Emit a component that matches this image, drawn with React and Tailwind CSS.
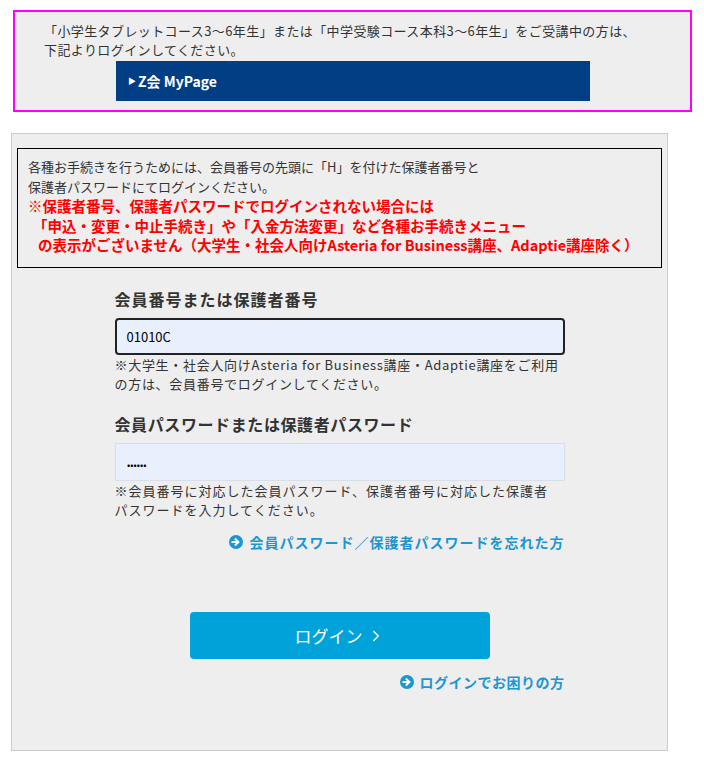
import { ChevronRight } from 'lucide-react'

const font = { fontFamily: '"Noto Sans CJK JP", "Noto Sans", sans-serif' }

function ArrowCircle() {
  return (
    <svg className="w-[14px] h-[14px] shrink-0" viewBox="0 0 16 16">
      <circle cx="8" cy="8" r="8" fill="#1b96d3" />
      <path d="M4 8h6.5M7.5 4.8L10.8 8 7.5 11.2" fill="none" stroke="#fff" strokeWidth="2.2" strokeLinecap="square" />
    </svg>
  )
}

function App() {
  return (
    <div className="w-[704px] min-h-[759px] bg-white pt-[10px] text-[#333]" style={font}>
      {/* MyPage notice */}
      <div className="ml-[13px] w-[679px] h-[102px] border-2 border-[#ff00ff] bg-[#eeeeee]">
        <p className="pl-[29px] pt-[9px] text-[13px] leading-[19px] tracking-[0.4px]">
          「小学生タブレットコース3〜6年生」または「中学受験コース本科3〜6年生」をご受講中の方は、
          <br />
          下記よりログインしてください。
        </p>
        <div className="ml-[101px] mt-[2px] w-[474px] h-[40px] bg-[#023e84] flex items-center pl-[12px] text-white text-[14px] font-bold">
          <span className="text-[8px] mr-[2px]">▶</span>
          Z会 MyPage
        </div>
      </div>

      {/* Login panel */}
      <div className="ml-[11px] mt-[21px] w-[657px] h-[618px] border border-[#cccccc] bg-[#eeeeee] pt-[14px]">
        <div className="ml-[5px] w-[645px] h-[120px] border border-black pl-[10px] pt-[8px] text-[13px] leading-[19.5px]">
          <p>
            各種お手続きを行うためには、会員番号の先頭に「H」を付けた保護者番号と
            <br />
            保護者パスワードにてログインください。
          </p>
          <p className="text-[#ff0000] font-bold text-[14.5px]">
            ※保護者番号、保護者パスワードでログインされない場合には
            <br />
            <span className="pl-[5px]">「申込・変更・中止手続き」や「入金方法変更」など各種お手続きメニュー</span>
            <br />
            <span className="pl-[10px]">の表示がございません（大学生・社会人向けAsteria for Business講座、Adaptie講座除く）</span>
          </p>
        </div>

        <div className="mx-auto w-[450px]">
          <label className="block mt-[19px] text-[16px] leading-[24px] font-bold tracking-[1px] text-[#333]">
            会員番号または保護者番号
          </label>
          <div className="mt-[7px] h-[37px] border-2 border-[#222] rounded-[4px] bg-[#e8f0fe] flex items-center pl-[10px] text-[13px] text-black">
            01010C
          </div>
          <p className="text-[13px] leading-[19px] tracking-[0.7px] whitespace-nowrap">
            ※大学生・社会人向けAsteria for Business講座・Adaptie講座をご利用
            <br />
            の方は、会員番号でログインしてください。
          </p>

          <label className="block mt-[19px] text-[16px] leading-[24px] font-bold tracking-[0.6px] text-[#333]">
            会員パスワードまたは保護者パスワード
          </label>
          <div className="mt-[7px] h-[38px] border border-[#d9dfe8] bg-[#e8f0fe] flex items-center pl-[11px] text-[13px] font-bold text-black tracking-[-1px]">
            ......
          </div>
          <p className="text-[13px] leading-[19px] tracking-[1px] whitespace-nowrap">
            ※会員番号に対応した会員パスワード、保護者番号に対応した保護者
            <br />
            パスワードを入力してください。
          </p>

          <div className="mt-[13px] flex justify-end">
            <a className="flex items-center gap-[7px] text-[14px] leading-[20px] font-bold tracking-[1px] text-[#1b96d3]">
              <ArrowCircle />
              会員パスワード／保護者パスワードを忘れた方
            </a>
          </div>

          <div className="mt-[60px] flex justify-center">
            <button className="w-[300px] h-[47px] rounded-[4px] bg-[#00a2da] text-white text-[17px] flex items-center justify-center gap-[4px]">
              ログイン
              <ChevronRight className="w-[18px] h-[18px]" strokeWidth={2} />
            </button>
          </div>

          <div className="mt-[13px] flex justify-end">
            <a className="flex items-center gap-[6px] text-[14px] leading-[20px] font-bold tracking-[0.5px] text-[#1b96d3]">
              <ArrowCircle />
              ログインでお困りの方
            </a>
          </div>
        </div>
      </div>
    </div>
  )
}

export default App
